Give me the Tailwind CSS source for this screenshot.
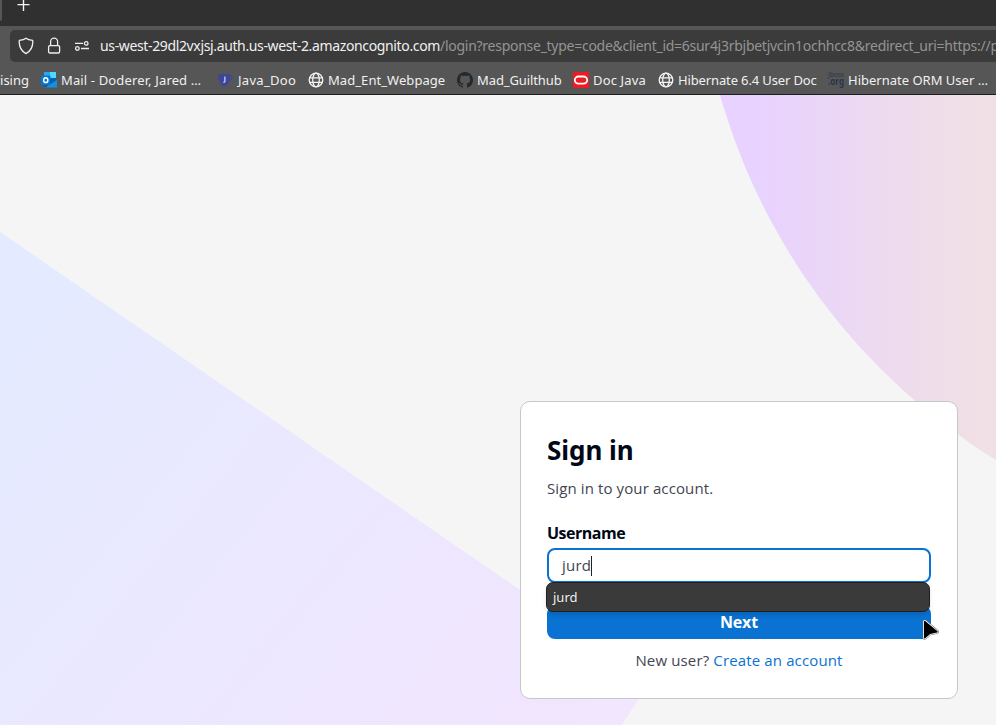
<!DOCTYPE html>
<html lang="en">
<head>
<meta charset="utf-8">
<title>Sign in</title>
<script src="https://cdn.jsdelivr.net/npm/@tailwindcss/browser@4"></script>
</head>
<body class="w-[996px] h-[725px] overflow-hidden flex flex-col bg-[#f5f5f5] font-['Open_Sans','Noto_Sans',sans-serif]">
<header class="h-[95px] shrink-0 flex flex-col bg-[#565656] border-b border-[#1d1d1d] font-['Noto_Sans',sans-serif] text-[#f0f0f0]">
  <div class="h-[26px] bg-[#303030] flex">
    <div class="w-[2px] h-[21px] bg-[#565656] rounded-br-sm"></div>
    <svg class="ml-[15px]" width="14" height="14" viewBox="0 0 14 14" stroke="#f5f5f5" stroke-width="1.4"><path d="M6.5 -1V11M.5 4.6H12.5"/></svg>
  </div>
  <div class="mt-1 ml-[10px] h-8 rounded-l-[5px] bg-[#3b3b3b] flex items-center">
    <div class="flex items-center w-[90px] shrink-0 pl-2">
      <svg width="16" height="18" viewBox="0 0 16 18" fill="none" stroke="#eee" stroke-width="1.3" stroke-linejoin="round"><path d="M8 1.2C6.4 2.7 4 3.2 1.3 3.4C.8 9 2.2 13.4 8 16.6C13.800 13.4 15.200 9 14.700 3.400C12 3.200 9.600 2.700 8 1.200Z"/></svg>
      <svg class="ml-[13px]" width="14" height="18" viewBox="0 0 14 18" fill="none" stroke="#eee" stroke-width="1.3"><rect x="1.600" y="8.600" width="11" height="7.400" rx="1.200"/><path d="M3.600 8.500V4.700a3.500 3.500 0 0 1 7 0V8.500"/></svg>
      <svg class="ml-[13px]" width="16" height="14" viewBox="0 0 16 14" fill="none" stroke="#eee" stroke-width="1.300"><path d="M1 4.400H9M7 9.500H15"/><circle cx="12.200" cy="4.400" r="1.800"/><circle cx="3.400" cy="9.500" r="1.800"/></svg>
    </div>
    <div class="flex whitespace-pre text-[14px] leading-5"><span class="w-[340px] shrink-0 tracking-[-0.36px]">us-west-29dl2vxjsj.auth.us-west-2.amazoncognito.com</span><span class="text-[#949494] tracking-[-0.27px]">/login?response_type=code&amp;client_id=6sur4j3rbjbetjvcin1ochhcc8&amp;redirect_uri=https://p</span></div>
  </div>
  <nav class="h-[32px] flex items-center text-[13px] leading-5 whitespace-nowrap pt-[4px]">
    <span class="w-[41px] shrink-0 flex justify-end pr-[12px] overflow-hidden">vising</span>
    <a class="w-[176px] shrink-0 flex items-center gap-[4px]"><svg width="16" height="16" viewBox="0 0 16 16"><path fill="#0a5fae" d="M3 0h12v15H3z"/><path fill="#28a8ea" d="M3 0h8v6H3z"/><path fill="#50d9ff" d="M9 0h6v6H9z"/><path fill="#0358a7" d="M4 6h7v9H4z"/><path fill="#1490df" d="M16 8v7.500H4z"/><rect y="3.500" width="9.500" height="9.500" rx="1" fill="#0078d4"/><ellipse cx="4.750" cy="8.200" rx="2.100" ry="2.400" fill="none" stroke="#fff" stroke-width="1.500"/></svg><span class="tracking-[0.14px]">Mail - Doderer, Jared …</span></a>
    <a class="w-[91px] shrink-0 flex items-center gap-[4px]"><svg width="17" height="16" viewBox="0 0 17 16"><path fill="#3d4795" d="M1 2h12v1h2.500v3.500L13 8.500Q11.500 13 8.500 13H6Q1 11 1 2Z"/><path fill="#565656" d="M13 4h1.500v2L13 7Z"/><ellipse cx="7" cy="13.300" rx="3.500" ry="1" fill="#3d4795"/><path d="M7.900 4.500V9.200Q7.900 10.400 6.300 10.200" fill="none" stroke="#d6d9ee" stroke-width="1.200"/></svg><span class="tracking-[0.3px]">Java_Doo</span></a>
    <a class="w-[149px] shrink-0 flex items-center gap-[4px]"><svg width="16" height="16" viewBox="0 0 16 16" fill="none" stroke="#f3f3f3" stroke-width="1.300"><circle cx="8" cy="8" r="6.800"/><ellipse cx="8" cy="8" rx="3.300" ry="6.800"/><path d="M1.500 5.900H14.500M1.500 10.300H14.500"/></svg><span class="tracking-[0.06px]">Mad_Ent_Webpage</span></a>
    <a class="w-[116px] shrink-0 flex items-center gap-[4px]"><svg width="16" height="16" viewBox="0 0 16 16" fill="#24292f"><path d="M8 0C3.580 0 0 3.580 0 8c0 3.540 2.290 6.530 5.470 7.590.4.070.55-.17.55-.38 0-.19-.01-.82-.01-1.490-2.010.37-2.530-.49-2.690-.94-.09-.23-.48-.94-.82-1.130-.28-.15-.68-.52-.01-.53.63-.01 1.080.58 1.230.82.72 1.210 1.870.87 2.330.66.07-.52.28-.87.51-1.070-1.780-.2-3.640-.89-3.640-3.950 0-.87.31-1.590.82-2.150-.08-.2-.36-1.020.08-2.120 0 0 .67-.21 2.200.82.64-.18 1.320-.27 2-.27s1.360.09 2 .27c1.530-1.040 2.200-.82 2.200-.82.44 1.100.16 1.920.08 2.120.51.56.82 1.270.82 2.150 0 3.070-1.870 3.750-3.650 3.950.29.25.54.73.54 1.480 0 1.070-.01 1.930-.01 2.200 0 .21.15.46.55.38A8.010 8.010 0 0 0 16 8c0-4.420-3.580-8-8-8Z"/></svg><span class="tracking-[-0.1px]">Mad_Guilthub</span></a>
    <a class="w-[85px] shrink-0 flex items-center gap-[4px]"><svg width="16" height="16" viewBox="0 0 16 16"><path fill="#ed1c24" d="M0 0h16v16H0z"/><rect x="1.800" y="4.500" width="12.400" height="7.200" rx="3.600" fill="none" stroke="#fff" stroke-width="1.800"/></svg><span class="tracking-[0.14px]">Doc Java</span></a>
    <a class="w-[170px] shrink-0 flex items-center gap-[4px]"><svg width="16" height="16" viewBox="0 0 16 16" fill="none" stroke="#f3f3f3" stroke-width="1.300"><circle cx="8" cy="8" r="6.800"/><ellipse cx="8" cy="8" rx="3.300" ry="6.800"/><path d="M1.500 5.900H14.500M1.500 10.300H14.500"/></svg><span class="tracking-[-0.13px]">Hibernate 6.4 User Doc</span></a>
    <a class="shrink-0 flex items-center gap-[4px]"><svg width="16" height="16" viewBox="0 0 16 16" class="overflow-visible fill-[#27364d] font-['Noto_Sans',sans-serif]"><text x="0" y="5" font-size="6.500" textLength="16" lengthAdjust="spacingAndGlyphs">jboss</text><text x="0" y="13" font-size="10" font-weight="700" textLength="16" lengthAdjust="spacingAndGlyphs">.org</text></svg><span>Hibernate ORM User …</span></a>
  </nav>
</header>
<main class="relative flex-1 overflow-hidden pl-[520px] pt-[306px]">
  <svg class="absolute inset-0" width="996" height="630" viewBox="0 95 996 630">
    <defs>
      <linearGradient id="a" gradientUnits="userSpaceOnUse" x1="30" y1="320" x2="560" y2="750"><stop stop-color="#e4eaff"/><stop offset="1" stop-color="#f2e5fe"/></linearGradient>
      <linearGradient id="b" gradientUnits="userSpaceOnUse" x1="760" y1="0" x2="996" y2="0"><stop stop-color="#e8d2ff"/><stop offset=".5" stop-color="#eddaf0"/><stop offset="1" stop-color="#f1e0e3"/></linearGradient>
    </defs>
    <path fill="url(#a)" d="M0 232L658 685L647.500 686L621.500 725H0Z"/>
    <circle cx="1326.700" cy="-76.900" r="630.600" fill="url(#b)"/>
  </svg>
  <section class="relative w-[438px] h-[298px] rounded-[10px] border border-[#c6c6cd] bg-white px-[26px] pt-[31px] text-[15px] text-[#424650]">
    <h1 class="text-[26px] leading-[34px] font-bold text-[#000716] font-['Noto_Sans',sans-serif] tracking-[-0.05px]">Sign in</h1>
    <p class="mt-[11px] leading-5 tracking-[0.11px]">Sign in to your account.</p>
    <label class="block mt-[25px] leading-5 font-bold text-[#000716] text-[16px] tracking-[-0.5px]">Username</label>
    <div class="mt-[5px] h-[35px] w-[384px] border-2 border-[#0972d3] rounded-[8px] flex items-center pl-[13px]"><span class="tracking-[0.2px]">jurd</span><span class="w-px h-5 bg-[#222]"></span></div>
    <button class="mt-[23px] h-[33px] w-[384px] rounded-[8px] bg-[#0972d3] text-white font-bold leading-[33px] block text-[16px] tracking-[-0.2px]">Next</button>
    <p class="mt-[11px] text-center leading-5 tracking-[0.14px]">New user? <a class="text-[#0972d3]">Create an account</a></p>
    <div class="absolute left-[25px] top-[180px] w-[384px] h-[30px] rounded-[7px] border border-[#202020] bg-[#3a3a3a] shadow-md text-[#eee] text-[13px] leading-[28px] pl-[6px] font-['Noto_Sans',sans-serif]">jurd</div>
  </section>
  <svg class="absolute left-[921px] top-[523px]" width="20" height="25" viewBox="921 618 20 25" stroke-linejoin="round"><path d="M924.700 621.500V637.800L930 633.300L937 631.800Z" stroke="#666" stroke-width="4"/><path d="M924.700 621.500V637.800L930 633.300L937 631.800Z" stroke="#fff" stroke-width="3"/><path d="M924.700 621.500V637.800L930 633.300L937 631.800Z" stroke="#000" stroke-width="1.400"/></svg>
</main>
</body>
</html>
